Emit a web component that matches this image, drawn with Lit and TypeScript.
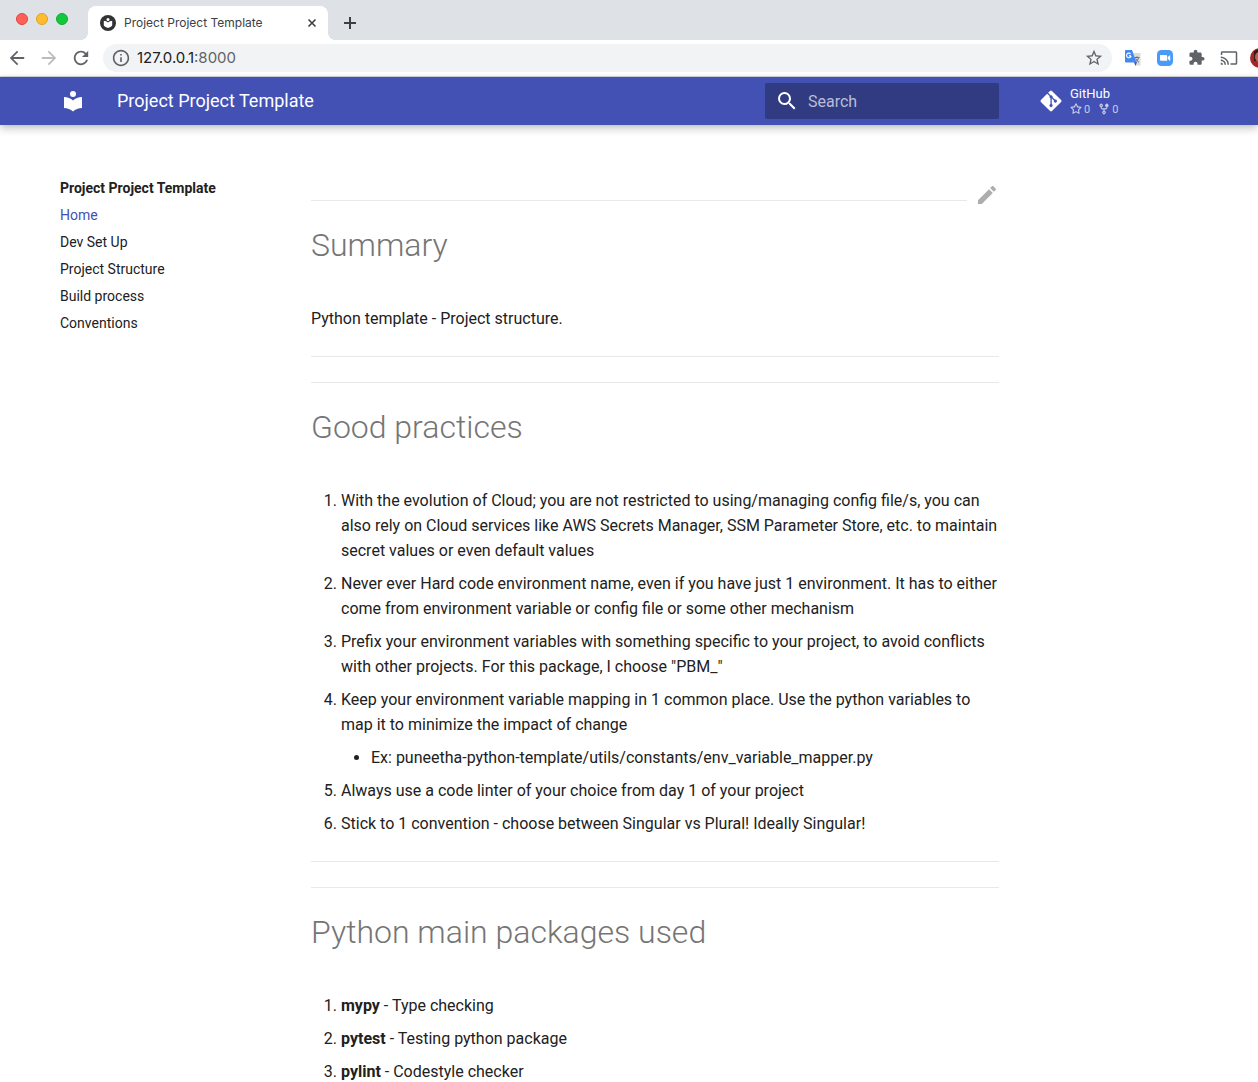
import { LitElement, html, css, svg } from "lit";
import { customElement } from "lit/decorators.js";

const BOOK =
  "M12 8a3 3 0 0 0 3-3 3 3 0 0 0-3-3 3 3 0 0 0-3 3 3 3 0 0 0 3 3m0 3.54C9.64 9.35 6.5 8 3 8v11c3.5 0 6.64 1.35 9 3.54 2.36-2.19 5.5-3.54 9-3.54V8c-3.5 0-6.64 1.35-9 3.54z";
const MAGNIFY =
  "M9.5 3A6.5 6.5 0 0 1 16 9.5c0 1.61-.59 3.09-1.56 4.23l.27.27h.79l5 5-1.5 1.5-5-5v-.79l-.27-.27A6.516 6.516 0 0 1 9.5 16 6.5 6.5 0 0 1 3 9.5 6.5 6.5 0 0 1 9.5 3m0 2C7 5 5 7 5 9.5S7 14 9.5 14 14 12 14 9.5 12 5 9.5 5z";
const PENCIL =
  "M20.71 7.04c.39-.39.39-1.04 0-1.41l-2.34-2.34c-.37-.39-1.02-.39-1.41 0l-1.84 1.83 3.75 3.75M3 17.25V21h3.75L17.81 9.93l-3.75-3.75L3 17.25z";
const GIT =
  "M439.55 236.05L244 40.45a28.87 28.87 0 0 0-40.81 0l-40.66 40.63 51.52 51.52c27.06-9.14 52.68 16.77 43.39 43.68l49.66 49.66c34.23-11.8 61.18 31 35.47 56.69-26.49 26.49-70.21-2.87-56-37.34L240.22 199v121.85c25.3 12.54 22.26 41.85 9.08 55a34.34 34.34 0 0 1-48.55 0c-17.57-17.6-11.07-46.91 11.25-56v-123c-20.8-8.51-24.6-30.74-18.64-45L142.57 101 8.45 235.14a28.86 28.86 0 0 0 0 40.81l195.61 195.6a28.86 28.86 0 0 0 40.8 0l194.69-194.69a28.86 28.86 0 0 0 0-40.81z";
const OCT_STAR =
  "M8 .25a.75.75 0 01.673.418l1.882 3.815 4.21.612a.75.75 0 01.416 1.279l-3.046 2.97.719 4.192a.75.75 0 01-1.088.791L8 12.347l-3.766 1.98a.75.75 0 01-1.088-.79l.72-4.194L.818 6.374a.75.75 0 01.416-1.28l4.21-.611L7.327.668A.75.75 0 018 .25zm0 2.445L6.615 5.5a.75.75 0 01-.564.41l-3.097.45 2.24 2.184a.75.75 0 01.216.664l-.528 3.084 2.769-1.456a.75.75 0 01.698 0l2.77 1.456-.53-3.084a.75.75 0 01.216-.664l2.24-2.183-3.096-.45a.75.75 0 01-.564-.41L8 2.694v.001z";
const OCT_FORK =
  "M5 3.25a.75.75 0 11-1.5 0 .75.75 0 011.5 0zm0 2.122a2.25 2.25 0 10-1.5 0v.878A2.25 2.25 0 005.75 8.5h1.5v2.128a2.251 2.251 0 101.5 0V8.5h1.5a2.25 2.25 0 002.25-2.25v-.878a2.25 2.25 0 10-1.5 0v.878a.75.75 0 01-.75.75h-4.5A.75.75 0 015 6.25v-.878zm3.75 7.378a.75.75 0 11-1.5 0 .75.75 0 011.5 0zm3-8.75a.75.75 0 100-1.5.75.75 0 000 1.5z";
const PUZZLE =
  "M20.5 11H19V7c0-1.1-.9-2-2-2h-4V3.5C13 2.12 11.88 1 10.5 1S8 2.12 8 3.5V5H4c-1.1 0-1.99.9-1.99 2v3.8H3.5c1.49 0 2.7 1.21 2.7 2.7s-1.21 2.7-2.7 2.7H2V20c0 1.1.9 2 2 2h3.8v-1.5c0-1.49 1.21-2.7 2.7-2.7 1.49 0 2.7 1.21 2.7 2.7V22H17c1.1 0 2-.9 2-2v-4h1.5c1.38 0 2.5-1.12 2.5-2.5S21.88 11 20.5 11z";
const CAST =
  "M21 3H3c-1.1 0-2 .9-2 2v3h2V5h18v14h-7v2h7c1.1 0 2-.9 2-2V5c0-1.1-.9-2-2-2zM1 18v3h3c0-1.66-1.34-3-3-3zm0-4v2c2.76 0 5 2.24 5 5h2c0-3.87-3.13-7-7-7zm0-4v2c4.97 0 9 4.03 9 9h2c0-6.08-4.93-11-11-11z";
const STAR =
  "M22 9.24l-7.19-.62L12 2 9.19 8.63 2 9.24l5.46 4.73L5.82 21 12 17.27 18.18 21l-1.63-7.03L22 9.24zM12 15.4l-3.76 2.27 1-4.28-3.32-2.88 4.38-.38L12 6.1l1.71 4.04 4.38.38-3.32 2.88 1 4.28L12 15.4z";
const BACK = "M20 11H7.83l5.59-5.59L12 4l-8 8 8 8 1.41-1.41L7.83 13H20v-2z";
const FORWARD = "M12 4l-1.41 1.41L16.17 11H4v2h12.17l-5.58 5.59L12 20l8-8z";
const RELOAD =
  "M17.65 6.35C16.2 4.9 14.21 4 12 4c-4.42 0-7.99 3.58-7.99 8s3.57 8 7.99 8c3.73 0 6.84-2.55 7.73-6h-2.08c-.82 2.33-3.04 4-5.65 4-3.31 0-6-2.69-6-6s2.69-6 6-6c1.66 0 3.14.69 4.22 1.78L13 11h7V4l-2.35 2.35z";
const INFO =
  "M11 7h2v2h-2zm0 4h2v6h-2zm1-9C6.48 2 2 6.48 2 12s4.48 10 10 10 10-4.48 10-10S17.52 2 12 2zm0 18c-4.41 0-8-3.59-8-8s3.59-8 8-8 8 3.59 8 8-3.59 8-8 8z";
const CLOSE = "M1.500 1.500l7 7M8.500 1.500l-7 7";
const PLUS = "M7 1v12M1 7h12";

const icon = (d: string, size: number, box = "0 0 24 24") => html`
  <svg width=${size} height=${size} viewBox=${box} fill="currentColor" aria-hidden="true">
    ${svg`<path d=${d}></path>`}
  </svg>
`;

const lineIcon = (d: string, size: number, weight: number) => html`
  <svg width=${size} height=${size} viewBox="0 0 ${size} ${size}" fill="none" aria-hidden="true">
    ${svg`<path d=${d} stroke="currentColor" stroke-width=${weight}></path>`}
  </svg>
`;

@customElement("browser-bar")
export class BrowserBar extends LitElement {
  static styles = css`
    :host {
      display: block;
      flex: none;
      color: #5f6368;
      font-family: Inter, "Liberation Sans", sans-serif;
    }
    svg {
      display: block;
      flex: none;
    }
    button {
      display: flex;
      flex: none;
      padding: 0;
      border: 0;
      background: none;
      color: inherit;
    }
    .tabs {
      display: flex;
      height: 40px;
      background: #dee1e6;
    }
    .lights {
      display: flex;
      gap: 8px;
      padding: 13px 20px 0 16px;
    }
    .light {
      box-sizing: border-box;
      width: 12px;
      height: 12px;
      border: 1px solid #e0443e;
      border-radius: 50%;
      background: #ff5f57;
    }
    .light.min {
      border-color: #dea123;
      background: #febc2e;
    }
    .light.max {
      border-color: #12ac28;
      background: #13c83c;
    }
    .tab {
      display: flex;
      align-items: center;
      box-sizing: border-box;
      width: 240px;
      margin-top: 6px;
      padding: 0 11px 0 12px;
      border-radius: 8px 8px 0 0;
      background: #fff;
      color: #3c4043;
      font-size: 12px;
      line-height: 16px;
    }
    .tab-title {
      flex: 1;
      margin-left: 8px;
      padding-bottom: 1px;
    }
    .new-tab {
      align-items: center;
      padding: 6px 8px 0 7px;
      color: #3c4043;
    }
    .foot {
      align-self: flex-end;
      width: 8px;
      height: 8px;
      background: radial-gradient(circle at 0 0, transparent 8px, #fff 8px);
    }
    .foot.right {
      background: radial-gradient(circle at 100% 0, transparent 8px, #fff 8px);
    }
    .lights + .foot {
      margin-left: -8px;
    }
    .tools {
      display: flex;
      align-items: center;
      height: 36px;
      padding-left: 8px;
      overflow: hidden;
      border-bottom: 1px solid #d8dade;
      background: #fff;
    }
    .nav {
      display: flex;
      gap: 14px;
    }
    .faded {
      color: #babcbe;
    }
    .omnibox {
      display: flex;
      flex: 1;
      align-items: center;
      height: 28px;
      margin: 0 12px 0 13px;
      padding: 0 9px;
      border-radius: 14px;
      background: #f1f3f4;
    }
    .url {
      flex: 1;
      margin-left: 7px;
      font-size: 15px;
      line-height: 20px;
    }
    .host {
      color: #202124;
    }
    .extensions {
      display: flex;
      align-items: center;
      gap: 14px;
    }
    .avatar {
      width: 8px;
      margin-left: -2px;
      overflow: hidden;
    }
  `;

  render() {
    return html`
      <div class="tabs">
        <div class="lights">
          <span class="light"></span><span class="light min"></span><span class="light max"></span>
        </div>
        <span class="foot"></span>
        <div class="tab">
          <svg width="16" height="16" viewBox="0 0 16 16" aria-hidden="true">
            <circle cx="8" cy="8" r="8" fill="#333"></circle>
            <circle cx="8" cy="4.6" r="1.5" fill="#fff"></circle>
            <path d="M3.8 5.8C5.4 5.9 6.8 6.4 8 7.4c1.2-1 2.6-1.500 4.2-1.600v4.800C11.500 11.800 9.500 12.800 8 12.900c-1.500-.1-3.500-1.100-4.200-2.300z" fill="#fff"></path>
          </svg>
          <span class="tab-title">Project Project Template</span>
          <button aria-label="Close tab">${lineIcon(CLOSE, 10, 1.6)}</button>
        </div>
        <span class="foot right"></span>
        <button class="new-tab" aria-label="New tab">${lineIcon(PLUS, 14, 2)}</button>
      </div>
      <div class="tools">
        <div class="nav">
          <button aria-label="Back">${icon(BACK, 18, "2 2 20 20")}</button>
          <button class="faded" aria-label="Forward">${icon(FORWARD, 18, "2 2 20 20")}</button>
          <button aria-label="Reload">${icon(RELOAD, 18, "2 2 20 20")}</button>
        </div>
        <div class="omnibox">
          ${icon(INFO, 18, "1 1 22 22")}
          <span class="url"><span class="host">127.0.0.1</span>:8000</span>
          <button aria-label="Bookmark this page">${icon(STAR, 18, "1 1 22 22")}</button>
        </div>
        <div class="extensions">
          <button aria-label="Translate">
            <svg width="18" height="18" viewBox="0 0 18 18">
              <path d="M7 4h9.500v12.500H11z" fill="#dcdcdc"></path>
              <path d="M10 13h3l-1.500 4z" fill="#3a50c8"></path>
              <path d="M2 1h6l4.500 12.500H2A1 1 0 0 1 1 12.500V2a1 1 0 0 1 1-1z" fill="#4688f1"></path>
              <path d="M7 6.900H4.900M6.600 4.900a2.300 2.300 0 1 0 .5 2" fill="none" stroke="#fff" stroke-width="1.100"></path>
              <path d="M10.500 8.500h5M13 7.300v1.200M14.500 8.700c-.5 2-1.500 3.300-3 4.300M11.700 9.500c.7 1.700 1.800 2.900 3.300 3.800" fill="none" stroke="#687478" stroke-width="1"></path>
            </svg>
          </button>
          <button aria-label="Video meeting">
            <svg width="18" height="18" viewBox="0 0 18 18">
              <rect x="1" y="1" width="16" height="16" rx="4.500" fill="#4a9af8"></rect>
              <path d="M4 6h6a1.200 1.200 0 0 1 1.200 1.200v4.600H5.200A1.200 1.200 0 0 1 4 10.600z" fill="#fff"></path>
              <path d="M11.800 7.900L14.200 6v6l-2.400-1.900z" fill="#fff"></path>
            </svg>
          </button>
          <button aria-label="Extensions">${icon(PUZZLE, 18, "0 0 25 25")}</button>
          <button aria-label="Cast">${icon(CAST, 18)}</button>
          <button class="avatar" aria-label="Profile">
            <svg width="20" height="20" viewBox="0 0 20 20">
              <circle cx="10" cy="10" r="10" fill="#a5262a"></circle>
              <path d="M4 4c3-4 9-4 12 0v9H4z" fill="#3a1517"></path>
              <ellipse cx="9" cy="9" rx="4" ry="5" fill="#b06a50"></ellipse>
            </svg>
          </button>
        </div>
      </div>
    `;
  }
}

@customElement("site-header")
export class SiteHeader extends LitElement {
  static styles = css`
    :host {
      z-index: 1;
      display: flex;
      flex: none;
      align-items: center;
      box-sizing: border-box;
      height: 48px;
      padding-left: 61px;
      background: #4351b5;
      box-shadow: 0 0 4px rgba(0, 0, 0, 0.1), 0 4px 8px rgba(0, 0, 0, 0.2);
      color: #fff;
      font-family: Roboto, "Liberation Sans", sans-serif;
    }
    svg {
      display: block;
      flex: none;
    }
    a {
      color: inherit;
      text-decoration: none;
    }
    .title {
      flex: 1;
      margin-left: 32px;
      padding-bottom: 2px;
      font-size: 18px;
    }
    .search {
      display: flex;
      align-items: center;
      box-sizing: border-box;
      width: 234px;
      height: 36px;
      padding: 0 10px;
      border-radius: 2px;
      background: #313b81;
    }
    .search input {
      flex: 1;
      min-width: 0;
      margin-left: 9px;
      padding: 0;
      border: 0;
      outline: 0;
      background: none;
      color: #fff;
      font: 16px Roboto, "Liberation Sans", sans-serif;
    }
    .search input::placeholder {
      color: #b9bdd9;
      opacity: 1;
    }
    .repo {
      display: flex;
      align-items: center;
      box-sizing: border-box;
      width: 219px;
      margin: 0 0 0 40px;
      font-size: 13px;
      line-height: 16px;
    }
    .repo-text {
      margin-left: 7px;
    }
    .facts {
      display: flex;
      gap: 8px;
      color: #c7cbe9;
      font-size: 11px;
      line-height: 15px;
    }
    .fact {
      display: flex;
      align-items: center;
      gap: 2px;
    }
  `;

  render() {
    return html`
      <a href="#home" aria-label="Project Project Template home">${icon(BOOK, 24)}</a>
      <span class="title">Project Project Template</span>
      <label class="search">
        ${icon(MAGNIFY, 24)}
        <input type="text" placeholder="Search" aria-label="Search" />
      </label>
      <a class="repo" href="#github">
        ${icon(GIT, 24, "0 0 448 512")}
        <span class="repo-text">
          GitHub
          <span class="facts">
            <span class="fact">${icon(OCT_STAR, 12, "0 0 16 16")}0</span>
            <span class="fact">${icon(OCT_FORK, 12, "0 0 16 16")}0</span>
          </span>
        </span>
      </a>
    `;
  }
}

@customElement("app-root")
export class AppRoot extends LitElement {
  static styles = css`
    :host {
      display: flex;
      flex-direction: column;
      height: 100vh;
      background: #fff;
      color: #212121;
      font-family: Roboto, "Liberation Sans", sans-serif;
      font-size: 16px;
      line-height: 25px;
    }
    .page {
      display: grid;
      flex: 1;
      grid-template-columns: 251px minmax(0, 1fr);
      align-items: start;
      min-height: 0;
      padding: 0 259px 0 60px;
      overflow-y: auto;
      scrollbar-width: none;
    }
    .side {
      display: flex;
      flex-direction: column;
      gap: 9px;
      padding-top: 54px;
      font-size: 14px;
      line-height: 18px;
    }
    .side a {
      color: inherit;
      text-decoration: none;
    }
    .side a.active {
      color: #4351b5;
    }
    .side-title {
      font-weight: 700;
    }
    .content {
      padding: 58px 0 24px;
    }
    .top {
      display: flex;
      gap: 8px;
      margin-bottom: 17px;
    }
    .top hr {
      flex: 1;
      margin: 17px 0 0;
    }
    .edit {
      color: #adadad;
    }
    .edit svg {
      display: block;
    }
    hr {
      height: 1px;
      margin: 25px 0 23px;
      border: 0;
      background: #e8e8e8;
    }
    h1 {
      margin: 0 0 40px;
      color: #757575;
      font-size: 32px;
      font-weight: 300;
      line-height: 42px;
    }
    p {
      margin: 0;
    }
    ol,
    ul {
      display: flex;
      flex-direction: column;
      gap: 8px;
      margin: 0;
      padding-left: 30px;
    }
    ul {
      margin-top: 8px;
      list-style: disc;
    }
    b {
      font-weight: 700;
    }
  `;

  private pages = ["Home", "Dev Set Up", "Project Structure", "Build process", "Conventions"];

  private packages = [
    ["mypy", "Type checking"],
    ["pytest", "Testing python package"],
    ["pylint", "Codestyle checker"],
  ];

  render() {
    return html`
      <browser-bar></browser-bar>
      <site-header></site-header>
      <div class="page">
        <nav class="side" aria-label="Pages">
          <span class="side-title">Project Project Template</span>
          ${this.pages.map(
            (name, i) => html`<a class=${i === 0 ? "active" : ""} href="#${name}">${name}</a>`
          )}
        </nav>
        <main class="content">
          <div class="top">
            <hr />
            <a class="edit" href="#edit" aria-label="Edit this page">${icon(PENCIL, 24)}</a>
          </div>
          <h1>Summary</h1>
          <p>Python template - Project structure.</p>
          <hr />
          <hr />
          <h1>Good practices</h1>
          <ol>
            <li>
              With the evolution of Cloud; you are not restricted to using/managing config file/s,
              you can also rely on Cloud services like AWS Secrets Manager, SSM Parameter Store,
              etc. to maintain secret values or even default values
            </li>
            <li>
              Never ever Hard code environment name, even if you have just 1 environment. It has to
              either come from environment variable or config file or some other mechanism
            </li>
            <li>
              Prefix your environment variables with something specific to your project, to avoid
              conflicts with other projects. For this package, I choose "PBM_"
            </li>
            <li>
              Keep your environment variable mapping in 1 common place. Use the python variables to
              map it to minimize the impact of change
              <ul>
                <li>Ex: puneetha-python-template/utils/constants/env_variable_mapper.py</li>
              </ul>
            </li>
            <li>Always use a code linter of your choice from day 1 of your project</li>
            <li>Stick to 1 convention - choose between Singular vs Plural! Ideally Singular!</li>
          </ol>
          <hr />
          <hr />
          <h1>Python main packages used</h1>
          <ol>
            ${this.packages.map(([name, use]) => html`<li><b>${name}</b> - ${use}</li>`)}
          </ol>
        </main>
      </div>
    `;
  }
}
